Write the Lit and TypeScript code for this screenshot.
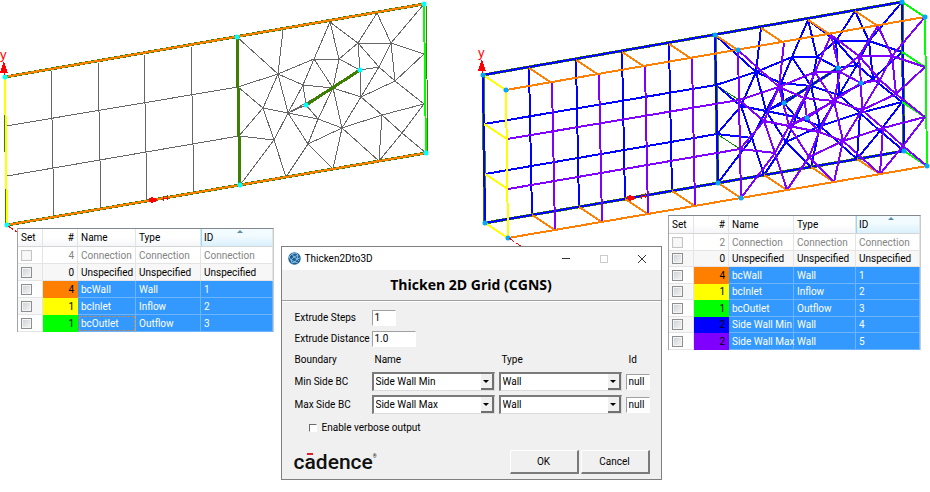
import { LitElement, html, svg, css } from "lit";
import { customElement, property } from "lit/decorators.js";
import { classMap } from "lit/directives/class-map.js";

type Point = [number, number];

const NODES: Record<string, Point> = {
  T0: [237, 37], T1: [283, 30], T2: [330, 22], T3: [377, 13], T4: [424, 4],
  R1: [424, 54], R2: [424, 104], R3: [426, 153],
  B0: [240, 185], B1: [286, 177], B2: [333, 169], B3: [379, 161],
  L1: [238, 87], L2: [239, 136],
  a: [278, 74], b: [314, 59], c: [339, 59], d: [358, 43], e: [391, 43],
  f: [360, 70], g: [379, 67], h: [395, 81], i: [361, 97], j: [333, 88],
  k: [303, 85], l: [306, 105], m: [263, 108], n: [288, 113], o: [318, 119],
  p: [342, 128], q: [382, 115], r: [274, 140], s: [308, 144], t: [402, 133],
  // structured block
  P0: [5, 77], P1: [51, 70], P2: [98, 62], P3: [144, 54], P4: [191, 46],
  Q0: [7, 225], Q1: [54, 217], Q2: [101, 209], Q3: [147, 201], Q4: [194, 193],
  W1: [6, 126], W2: [7, 176],
};

const TRIANGLES =
  "T0-a T1-a a-L1 a-b a-k a-m a-n T2-b T2-c T2-d b-c b-k b-j c-d c-f c-j d-e d-f d-g " +
  "T3-d T3-e T4-e e-g e-h e-R1 f-g f-i g-i g-h h-i h-R2 h-R1 i-j i-p i-q j-k j-n j-p " +
  "k-l k-n l-n l-o L1-m L2-m m-n m-r n-o n-r n-s o-p o-s j-o p-s p-q p-B2 p-B3 q-R2 " +
  "q-t t-R3 R2-t t-B3 q-B3 L2-r r-B0 r-B1 s-B1 s-B2";
const QUADS = "P1-Q1 P2-Q2 P3-Q3 P4-Q4 W1-L1 W2-L2";

const trace = (edges: string, dx = 0, dy = 0) =>
  edges
    .split(" ")
    .map((edge) => {
      const [from, to] = edge.split("-").map((id) => NODES[id]);
      return `M${from[0] + dx} ${from[1] + dy}L${to[0] + dx} ${to[1] + dy}`;
    })
    .join("");

const BACK: Point = [478, -2];
const FRONT: Point = [501, 13];

const connectors = (ids: string) =>
  ids
    .split(" ")
    .map((id) => {
      const [x, y] = NODES[id];
      return `M${x + BACK[0]} ${y + BACK[1]}L${x + FRONT[0]} ${y + FRONT[1]}`;
    })
    .join("");

const dots = (ids: string, [dx, dy]: Point, cls: string) =>
  ids.split(" ").map((id) => {
    const [x, y] = NODES[id];
    return svg`<circle class=${cls} cx=${x + dx} cy=${y + dy} r="2.5"></circle>`;
  });

const axes = (x: number, y: number) => svg`
  <text class="axis" x=${x - 4} y=${y - 18}>y</text>
  <path class="red-fill" d="M${x} ${y - 16}L${x + 4} ${y - 4}H${x - 4}Z"></path>
  <path class="red" d="M${x} ${y - 5}V${y - 2}"></path>`;

const marker = (x: number, y: number) => svg`
  <path class="red-fill" d="M${x - 3} ${y - 2}L${x} ${y - 3}L${x + 5} ${y - 1}V${y + 1}L${x} ${y + 3}L${x - 3} ${y + 2}Z"></path>
  <path class="red" d="M${x + 11} ${y - 4}V${y + 1}M${x + 11} ${y - 2}H${x + 15}M${x + 15} ${y - 5}V${y}"></path>`;

@customElement("mesh-view")
export class MeshView extends LitElement {
  @property() mode: "flat" | "thick" = "flat";

  static styles = css`
    :host { display: block; min-width: 0; }
    svg { display: block; width: 100%; height: auto; overflow: visible; }
    path { fill: none; shape-rendering: crispEdges; stroke-width: 2; }
    path.grey { stroke: #666; stroke-width: 1; }
    path.olive { stroke: #3d7f00; stroke-width: 3; }
    path.olive-thin { stroke: #3d7f00; stroke-width: 1; }
    path.orange { stroke: #ff8000; }
    path.yellow { stroke: #ff0; }
    path.lime { stroke: #0f0; }
    path.blue { stroke: #00f; }
    path.purple { stroke: #8000ff; }
    path.leaf { stroke: #008a00; stroke-width: 1; }
    path.red { stroke: #f00; stroke-width: 1; }
    path.dashed { stroke-dasharray: 6 2; }
    path.red-fill { fill: #f00; }
    .cyan { fill: #0ff; }
    .sky { fill: #00a8ff; }
    .axis { fill: #f00; font: 13px "Liberation Sans", sans-serif; }
  `;

  private flat() {
    return svg`
      <path class="grey" d=${trace(QUADS)}></path>
      <path class="grey" d=${trace(TRIANGLES)}></path>
      <path class="olive" d=${trace("T0-B0 l-f P0-T4 Q0-R3")}></path>
      <path class="olive-thin" d=${trace("P0-Q0", -1) + trace("T4-R3", 2)}></path>
      <path class="orange" d=${trace("P0-T4 Q0-R3")}></path>
      ${marker(152, 200)}
      <path class="yellow" d=${trace("P0-Q0")}></path>
      <path class="lime" d=${trace("T4-R3")}></path>
      ${dots("P0 Q0 T0 B0 T4 R3 f l", [0, 0], "cyan")}
      ${axes(4, 77)}
      <path class="red dashed" d="M8 226L17 232"></path>`;
  }

  private thick() {
    return svg`
      <path class="leaf" d=${connectors("L1 L2")}></path>
      <path class="blue" d=${trace(QUADS, ...BACK)}></path>
      <path class="blue" d=${trace(TRIANGLES, ...BACK)}></path>
      <path class="olive" d=${trace("P0-T4 Q0-R3 P0-Q0 T4-R3 T0-B0 l-f", ...BACK)}></path>
      <path class="blue" d=${trace("P0-T4 Q0-R3 P0-Q0 T4-R3 T0-B0 l-f", ...BACK)}></path>
      ${marker(630, 198)}
      <path class="orange" d=${connectors("P1 P2 P3 P4 T0 T1 T2 T3 Q1 Q2 Q3 Q4 B0 B1 B2 B3")}></path>
      <path class="lime" d=${connectors("T4 R1 R2 R3") + trace("T4-R3", ...FRONT)}></path>
      <path class="purple" d=${trace(QUADS, ...FRONT)}></path>
      <path class="purple" d=${trace(TRIANGLES + " T0-B0 l-f", ...FRONT)}></path>
      <path class="orange" d=${trace("P0-T4 Q0-R3", ...FRONT)}></path>
      <path class="yellow" d=${connectors("P0 W1 W2 Q0") + trace("P0-Q0", ...FRONT)}></path>
      ${dots("P0 Q0 T0 B0 T4 R3 f l", BACK, "sky")}
      ${dots("P0 Q0 T0 B0 T4 R3 f l", FRONT, "sky")}
      ${axes(482, 75)}
      <path class="red dashed" d="M509 238L522 247"></path>`;
  }

  render() {
    const thick = this.mode === "thick";
    return html`<svg
      viewBox=${thick ? "465 0 465 250" : "0 0 465 250"}
      role="img"
      aria-label=${thick ? "3D grid" : "2D grid"}
    >${thick ? this.thick() : this.flat()}</svg>`;
  }
}

interface Row {
  count: number;
  name: string;
  type: string;
  id: string;
  color?: string;
  focused?: boolean;
}

const row = (count: number, name: string, type: string, id: string, color?: string): Row => ({
  count, name, type, id, color,
});

const FLAT_ROWS: Row[] = [
  row(4, "Connection", "Connection", "Connection"),
  row(0, "Unspecified", "Unspecified", "Unspecified"),
  row(4, "bcWall", "Wall", "1", "orange"),
  row(1, "bcInlet", "Inflow", "2", "yellow"),
  { ...row(1, "bcOutlet", "Outflow", "3", "lime"), focused: true },
];

const THICK_ROWS: Row[] = [
  row(2, "Connection", "Connection", "Connection"),
  row(0, "Unspecified", "Unspecified", "Unspecified"),
  row(4, "bcWall", "Wall", "1", "orange"),
  row(1, "bcInlet", "Inflow", "2", "yellow"),
  row(1, "bcOutlet", "Outflow", "3", "lime"),
  row(2, "Side Wall Min", "Wall", "4", "blue"),
  row(2, "Side Wall Max", "Wall", "5", "purple"),
];

@customElement("bc-table")
export class BcTable extends LitElement {
  @property({ attribute: false }) rows: Row[] = [];
  @property({ reflect: true }) variant: "flat" | "thick" = "flat";

  static styles = css`
    :host {
      display: block;
      box-sizing: border-box;
      background: #fff;
      border-top: 1px solid #828790;
      border-left: 1px solid #a0a4aa;
      border-right: 1px solid #c8cacc;
      font: 10px/16px Roboto, "Open Sans", sans-serif;
      color: #000;
      --even: 17px;
      --name: 58px;
      --type: 65px;
    }
    :host([variant="thick"]) { --even: 16px; --name: 65px; --type: 62px; }
    table { width: 100%; table-layout: fixed; border-collapse: separate; border-spacing: 0; }
    .c-set { width: 25px; }
    .c-num { width: 35px; }
    .c-name { width: var(--name); }
    .c-type { width: var(--type); }
    th, td {
      box-sizing: border-box;
      height: 17px;
      padding: 0 0 0 3px;
      text-align: left;
      font-weight: 400;
      white-space: nowrap;
      line-height: 15px;
      border-right: 1px solid #e4e4e4;
      border-bottom: 1px solid #e4e4e4;
    }
    tbody tr:nth-child(even) td { height: var(--even); }
    tbody tr:nth-child(even) { background: #f7f7f7; }
    th { height: 18px; border-bottom-color: #d5d5d5; background: linear-gradient(#fff 50%, #f5f6f8); }
    th.num, td.num { text-align: right; padding: 0 3px 0 0; }
    th.sorted {
      position: relative;
      border-left: 1px solid #96d9f9;
      padding-left: 2px;
      background: linear-gradient(#f2fbff 40%, #d9f0fb);
    }
    th.sorted::before {
      content: "";
      position: absolute;
      top: 1px;
      left: 50%;
      border: 3px solid transparent;
      border-top: 0;
      border-bottom-color: #5b8ba8;
    }
    tr.disabled { color: #848484; }
    tr.selected td:nth-child(n + 3) {
      background: #3399ff;
      color: #fff;
      border-color: #6db5fb;
    }
    tr.selected td.num { border-color: transparent; }
    td.orange { background: #ff8000; }
    td.yellow { background: #ff0; }
    td.lime { background: #0f0; }
    td.blue { background: #00f; }
    td.purple { background: #8000ff; }
    tr td.focused { outline: 1px dashed #b98a5e; outline-offset: -2px; }
    input {
      appearance: none;
      display: block;
      box-sizing: border-box;
      width: 11px;
      height: 11px;
      margin: 0;
      border: 1px solid #8e8f8f;
      background: linear-gradient(135deg, #cbcfd5, #f6f6f6);
      box-shadow: inset 0 0 0 1px #f4f4f4;
    }
    input:disabled { border-color: #c4c4c4; background: #f8f8f8; }
  `;

  render() {
    return html`<table>
      <colgroup>
        <col class="c-set" /><col class="c-num" /><col class="c-name" /><col class="c-type" /><col />
      </colgroup>
      <thead>
        <tr>
          <th>Set</th><th class="num">#</th><th>Name</th><th>Type</th><th class="sorted">ID</th>
        </tr>
      </thead>
      <tbody>
        ${this.rows.map(
          (r, index) => html`<tr class=${classMap({ disabled: index === 0, selected: !!r.color })}>
            <td><input type="checkbox" aria-label=${`Set ${r.name}`} ?disabled=${index === 0} /></td>
            <td class=${`num ${r.color ?? ""}`}>${r.count}</td>
            <td class=${classMap({ focused: !!r.focused })}>${r.name}</td>
            <td>${r.type}</td>
            <td>${r.id}</td>
          </tr>`
        )}
      </tbody>
    </table>`;
  }
}

@customElement("thicken-dialog")
export class ThickenDialog extends LitElement {
  static styles = css`
    :host {
      display: block;
      box-sizing: border-box;
      border: 1px solid #7f7f7f;
      background: #f0f0f0;
      color: #000;
      font: 10px/16px Roboto, "Open Sans", sans-serif;
    }
    input, select, button { font: inherit; color: inherit; border-radius: 0; box-sizing: border-box; }
    .titlebar { display: flex; align-items: center; height: 23px; background: #fff; padding-left: 6px; gap: 4px; }
    .globe { width: 13px; height: 13px; }
    .caption { flex: 1; }
    .win { width: 38px; height: 23px; padding: 0; margin-left: -4px; border: 0; background: none; display: grid; place-items: center; }
    .win svg { width: 10px; height: 10px; fill: none; stroke: #333; shape-rendering: crispEdges; }
    .win .cross { shape-rendering: auto; }
    .win:disabled svg { stroke: #ccc; }
    h1 {
      margin: 0;
      font: 700 14px/30px "Open Sans", "Noto Sans", sans-serif;
      text-align: center;
      border-bottom: 1px solid #a0a0a0;
      box-shadow: 0 1px #fff;
    }
    .form {
      display: grid;
      grid-template-columns: 73px 1fr 1fr 24px;
      grid-template-rows: repeat(3, 21px) repeat(3, 23px);
      column-gap: 4px;
      align-items: center;
      padding: 6px 11px 0 13px;
    }
    .form > label { white-space: nowrap; }
    .wide { grid-column: 2 / -1; }
    .head { padding-left: 3px; }
    .field {
      display: block;
      width: 24px;
      height: 16px;
      padding: 0 0 0 2px;
      border: 1px solid #fff;
      border-top-color: #a0a0a0;
      border-left-color: #a0a0a0;
      background: #fff;
    }
    .field.long { width: 44px; }
    .combo {
      display: grid;
      grid-template-columns: 1fr 13px;
      height: 19px;
      box-sizing: border-box;
      border: 1px solid #dcdcdc;
      border-top: 2px solid #7a7a7a;
      border-left: 2px solid #7a7a7a;
      background: #fff;
    }
    .combo select {
      grid-area: 1 / 1 / 2 / 3;
      appearance: none;
      width: 100%;
      border: 0;
      background: none;
      padding: 0 14px 0 2px;
      outline: 0;
    }
    .drop {
      grid-area: 1 / 2;
      pointer-events: none;
      border-right: 2px solid #707070;
      border-bottom: 2px solid #707070;
      background: #f0f0f0;
      display: grid;
      place-items: center;
    }
    .drop::before { content: ""; border: 3px solid transparent; border-bottom: 0; border-top-color: #000; }
    .check { grid-column: 1 / -1; display: flex; align-items: center; gap: 5px; padding-left: 14px; }
    .check input {
      appearance: none;
      width: 8px;
      height: 8px;
      margin: 0;
      background: #fff;
      border: 1px solid #fff;
      border-top-color: #6b6b6b;
      border-left-color: #6b6b6b;
    }
    .footer { display: flex; align-items: center; gap: 2px; padding: 11px 11px 5px 12px; }
    .logo { flex: 1; display: flex; font: 500 21px/24px Roboto, Lato, sans-serif; color: #111; }
    .bar { position: relative; }
    .bar::before { content: ""; position: absolute; left: 3px; top: 3px; width: 6px; height: 2px; background: #e0202c; }
    .reg { font-size: 5px; line-height: 12px; font-weight: 400; }
    .push {
      width: 69px;
      height: 24px;
      padding: 0;
      background: #f0f0f0;
      border: 1px solid #fff;
      border-right: 2px solid #7a7a7a;
      border-bottom: 2px solid #7a7a7a;
    }
  `;

  private side(label: string, value: string, key: string) {
    return html`
      <label for=${key}>${label}</label>
      <span class="combo">
        <select id=${key}><option>${value}</option></select><span class="drop"></span>
      </span>
      <span class="combo">
        <select aria-label=${`${label} type`}><option>Wall</option></select><span class="drop"></span>
      </span>
      <input class="field" aria-label=${`${label} id`} .value=${"null"} />`;
  }

  render() {
    return html`
      <div class="titlebar">
        <svg class="globe" viewBox="0 0 13 13" aria-hidden="true">
          <circle cx="6.5" cy="6.5" r="6.2" fill="#1d6098"></circle>
          <path
            d="M1 5L4 2L8 1M4 2L6 5L10 3L8 1M1 5L3 8L6 5L9 7L12 6M10 3L9 7L7 10L3 8L4 11L7 10L10 11M9 7L11 9"
            fill="none" stroke="#9fd0ee" stroke-width=".8"
          ></path>
        </svg>
        <span class="caption">Thicken2Dto3D</span>
        <button class="win" aria-label="Minimize"><svg viewBox="0 0 10 10"><path d="M1 4.5H9"></path></svg></button>
        <button class="win" aria-label="Maximize" disabled>
          <svg viewBox="0 0 10 10"><path d="M1.500 1.500H8.500V8.500H1.500Z"></path></svg>
        </button>
        <button class="win" aria-label="Close">
          <svg class="cross" viewBox="0 0 10 10"><path d="M1 1L9 9M9 1L1 9"></path></svg>
        </button>
      </div>
      <h1>Thicken 2D Grid (CGNS)</h1>
      <div class="form">
        <label for="steps">Extrude Steps</label>
        <div class="wide"><input class="field" id="steps" .value=${"1"} /></div>
        <label for="distance">Extrude Distance</label>
        <div class="wide"><input class="field long" id="distance" .value=${"1.0"} /></div>
        <span>Boundary</span><span class="head">Name</span><span class="head">Type</span><span class="head">Id</span>
        ${this.side("Min Side BC", "Side Wall Min", "min")}
        ${this.side("Max Side BC", "Side Wall Max", "max")}
        <label class="check"><input type="checkbox" />Enable verbose output</label>
      </div>
      <div class="footer">
        <div class="logo">c<span class="bar">a</span>dence<span class="reg">®</span></div>
        <button class="push">OK</button>
        <button class="push">Cancel</button>
      </div>`;
  }
}

@customElement("app-root")
export class AppRoot extends LitElement {
  static styles = css`
    :host { display: block; background: #fff; }
    .views { display: grid; grid-template-columns: 1fr 1fr; }
    .panels {
      position: relative;
      display: flex;
      justify-content: space-between;
      align-items: flex-start;
      margin-top: -35px;
      padding: 0 9px 12px 17px;
    }
    .flat { flex: 0 1 257px; margin-top: 13px; }
    .dialog { flex: 0 1 381px; margin-top: 31px; }
    .thick { flex: 0 1 253px; }
  `;

  render() {
    return html`
      <div class="views">
        <mesh-view mode="flat"></mesh-view>
        <mesh-view mode="thick"></mesh-view>
      </div>
      <div class="panels">
        <bc-table class="flat" variant="flat" .rows=${FLAT_ROWS}></bc-table>
        <thicken-dialog class="dialog"></thicken-dialog>
        <bc-table class="thick" variant="thick" .rows=${THICK_ROWS}></bc-table>
      </div>`;
  }
}
